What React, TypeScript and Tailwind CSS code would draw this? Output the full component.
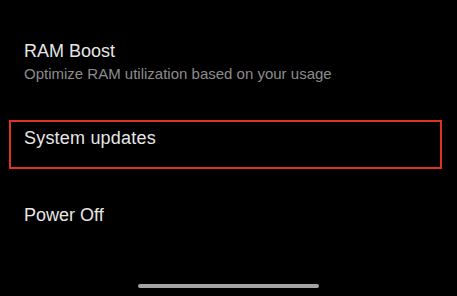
import React from "react";

const App = () => {
  return (
    <div
      className="w-[457px] h-[296px] bg-black flex flex-col overflow-hidden"
      style={{ fontFamily: '"Liberation Sans", Arial, sans-serif' }}
    >
      <div className="pt-[39px] pl-[24px]">
        <p className="text-[18px] leading-[24px] text-[#e6e6e6]">RAM Boost</p>
        <p className="mt-[1px] text-[15px] leading-[20px] text-[#8c8c8c]">
          Optimize RAM utilization based on your usage
        </p>
      </div>
      <div className="mt-[36px] ml-[9px] w-[433px] h-[49px] border-2 border-[#e0331f] pt-[4px] pl-[13px]">
        <p className="text-[18px] leading-[24px] tracking-[0.2px] text-[#e6e6e6]">System updates</p>
      </div>
      <p className="mt-[34px] pl-[24px] text-[18px] leading-[24px] text-[#e6e6e6]">Power Off</p>
      <div className="mt-auto mb-[8px] mx-auto w-[181px] h-[4px] rounded-full bg-[#a3a3a3]" />
    </div>
  );
};

export default App;
